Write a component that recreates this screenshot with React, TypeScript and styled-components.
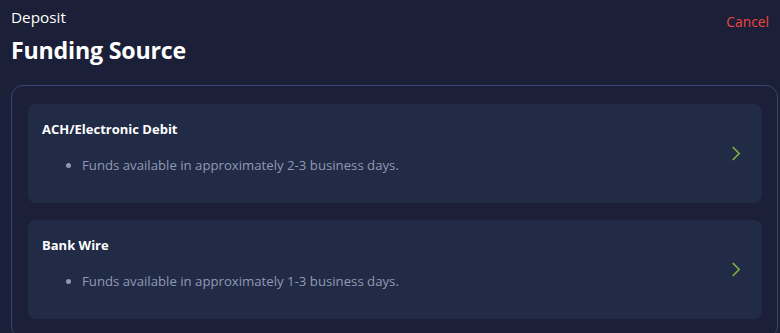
import React from "react";
import styled, { createGlobalStyle } from "styled-components";

const Global = createGlobalStyle`
  html, body { margin: 0; padding: 0; background: #1b1f37; }
  body { font-family: "Open Sans", "Noto Sans", sans-serif; color: #fff; }
`;

const Page = styled.div`
  padding: 0 2px 0 11px;
  min-height: 333px;
  box-sizing: border-box;
`;

const Header = styled.div`
  display: flex;
  justify-content: space-between;
  align-items: flex-start;
  padding-right: 9px;
`;

const TitleBlock = styled.div`
  display: flex;
  flex-direction: column;
`;

const Eyebrow = styled.div`
  font-size: 15.3px;
  line-height: 20px;
  margin-top: 7px;
  color: #ffffff;
`;

const Title = styled.h1`
  margin: 8px 0 0;
  font-size: 23.2px;
  line-height: 30px;
  font-weight: 700;
  letter-spacing: -0.2px;
`;

const CancelButton = styled.button`
  background: none;
  border: none;
  padding: 0;
  margin-top: 12px;
  font-family: inherit;
  font-size: 13.8px;
  line-height: 20px;
  color: #f0463c;
  cursor: pointer;
`;

const Panel = styled.div`
  margin-top: 20px;
  border: 1px solid #3a4474;
  border-radius: 12px;
  padding: 18px 15px 18px 16px;
  display: flex;
  flex-direction: column;
  gap: 17px;
`;

const Card = styled.div`
  background: #222b46;
  border-radius: 8px;
  padding: 16px 18px 28px 14px;
  display: flex;
  align-items: center;
  justify-content: space-between;
`;

const CardBody = styled.div`
  display: flex;
  flex-direction: column;
`;

const CardTitle = styled.div`
  font-size: 13px;
  line-height: 18px;
  font-weight: 700;
  color: #ffffff;
`;

const BulletList = styled.ul`
  margin: 17px 0 0;
  padding: 0 0 0 40px;
  list-style: disc;
  color: #8f99b4;
  font-size: 13.2px;
  line-height: 20px;
  li::marker { color: #8f99b4; }
`;

const Chevron = styled.svg`
  width: 15px;
  height: 15px;
  margin-top: 12px;
  flex: none;
`;

const methods = [
  { title: "ACH/Electronic Debit", note: "Funds available in approximately 2-3 business days." },
  { title: "Bank Wire", note: "Funds available in approximately 1-3 business days." },
];

export default function App() {
  return (
    <>
      <Global />
      <Page>
        <Header>
          <TitleBlock>
            <Eyebrow>Deposit</Eyebrow>
            <Title>Funding Source</Title>
          </TitleBlock>
          <CancelButton>Cancel</CancelButton>
        </Header>
        <Panel>
          {methods.map((m) => (
            <Card key={m.title}>
              <CardBody>
                <CardTitle>{m.title}</CardTitle>
                <BulletList>
                  <li>{m.note}</li>
                </BulletList>
              </CardBody>
              <Chevron viewBox="0 0 14 14" fill="none">
                <path d="M4 1.5 L9.5 7 L4 12.5" stroke="#7cb342" strokeWidth="1.5" strokeLinecap="square" />
              </Chevron>
            </Card>
          ))}
        </Panel>
      </Page>
    </>
  );
}
